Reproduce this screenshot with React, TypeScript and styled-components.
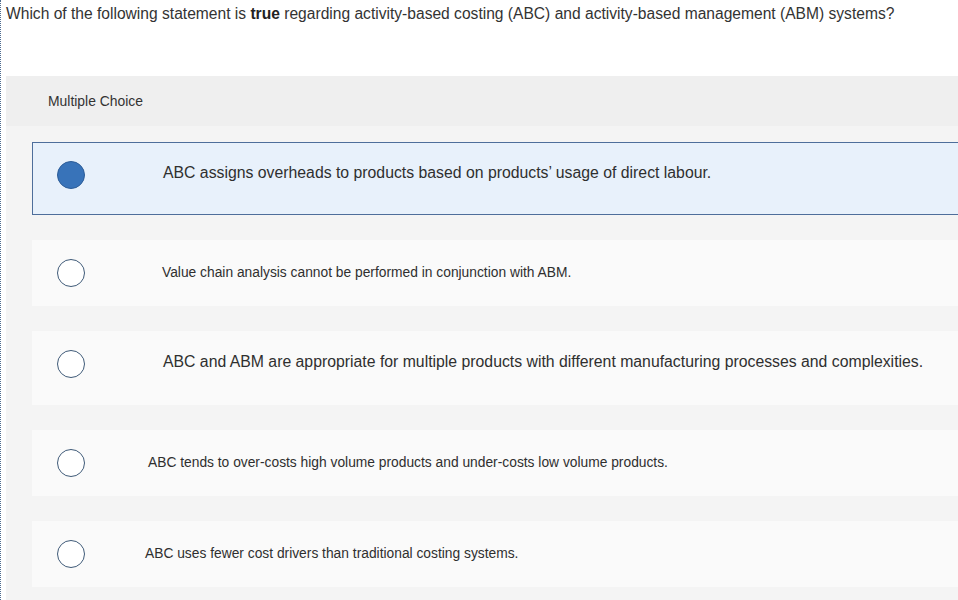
import React from "react";
import styled, { createGlobalStyle } from "styled-components";

const Global = createGlobalStyle`
  html, body { margin: 0; padding: 0; background: #ffffff; }
  body { font-family: "Liberation Sans", Arial, sans-serif; color: #2f2f2f; }
`;

const Page = styled.div`
  width: 958px;
  height: 600px;
  overflow: hidden;
  border-left: 1px dotted #4d6b8f;
  box-sizing: border-box;
  display: flex;
  flex-direction: column;
`;

const Question = styled.div`
  padding: 5px 0 0 5px;
  height: 76px;
  flex: none;
  box-sizing: border-box;
  font-size: 15.6px;
  line-height: 18px;
  color: #333;
  white-space: nowrap;
  b { font-weight: 700; color: #222; }
`;

const Panel = styled.div`
  margin-left: 5px;
  flex: 1;
  background: #f4f4f4;
  display: flex;
  flex-direction: column;
`;

const Header = styled.div`
  height: 50px;
  flex: none;
  background: #efefef;
  display: flex;
  align-items: center;
  padding-left: 42px;
  font-size: 13.9px;
  color: #333;
`;

const List = styled.div`
  display: flex;
  flex-direction: column;
  gap: 25px;
  padding: 16px 0 0 26px;
`;

const Option = styled.div<{ $selected?: boolean; $top: number; $bottom: number }>`
  display: flex;
  align-items: center;
  padding: ${(p) => p.$top}px 0 ${(p) => p.$bottom}px ${(p) => (p.$selected ? 24 : 25)}px;
  background: ${(p) => (p.$selected ? "#e8f1fb" : "#fafafa")};
  border: ${(p) => (p.$selected ? "1px solid #4e6e9b" : "none")};
  border-right: none;
`;

const Radio = styled.span<{ $checked?: boolean }>`
  flex: none;
  width: 28px;
  height: 28px;
  box-sizing: border-box;
  border-radius: 50%;
  border: 1.5px solid ${(p) => (p.$checked ? "#2d5d98" : "#3f5a78")};
  background: ${(p) => (p.$checked ? "#3873b9" : "#ffffff")};
`;

const Label = styled.span<{ $large?: boolean; $indent: number }>`
  margin-left: ${(p) => p.$indent}px;
  margin-bottom: ${(p) => (p.$large ? "4px" : "0")};
  font-size: ${(p) => (p.$large ? "15.8px" : "13.8px")};
  line-height: ${(p) => (p.$large ? "20px" : "16px")};
  color: #2f2f2f;
  white-space: nowrap;
`;

const options = [
  { text: "ABC assigns overheads to products based on products’ usage of direct labour.", large: true, indent: 78, selected: true, top: 18, bottom: 25 },
  { text: "Value chain analysis cannot be performed in conjunction with ABM.", large: false, indent: 77, top: 19, bottom: 19 },
  { text: "ABC and ABM are appropriate for multiple products with different manufacturing processes and complexities.", large: true, indent: 78, top: 19, bottom: 27 },
  { text: "ABC tends to over-costs high volume products and under-costs low volume products.", large: false, indent: 63, top: 19, bottom: 19 },
  { text: "ABC uses fewer cost drivers than traditional costing systems.", large: false, indent: 60, top: 19, bottom: 19 },
];

export default function App() {
  return (
    <>
      <Global />
      <Page>
        <Question>
          Which of the following statement is <b>true</b> regarding activity-based costing (ABC) and activity-based management (ABM) systems?
        </Question>
        <Panel>
          <Header>Multiple Choice</Header>
          <List>
            {options.map((o, i) => (
              <Option key={i} $selected={o.selected} $top={o.top} $bottom={o.bottom}>
                <Radio $checked={o.selected} />
                <Label $large={o.large} $indent={o.indent}>{o.text}</Label>
              </Option>
            ))}
          </List>
        </Panel>
      </Page>
    </>
  );
}
